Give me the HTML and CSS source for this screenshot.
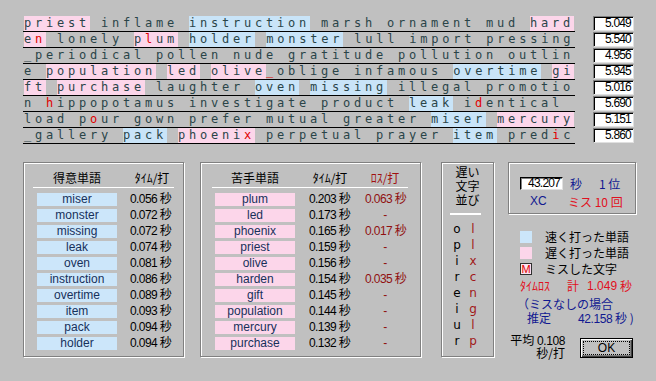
FILE: index.html
```html
<!DOCTYPE html>
<html lang="ja">
<head>
  <meta charset="UTF-8">
  <title>結果</title>
  <link rel="stylesheet" href="styles.css">
</head>
<body>
  <div class="dialog">
    <div class="typing">
      <div class="row"><div class="line"><span class="s">priest</span> inflame <span class="f">instruction</span> marsh ornament mud <span class="s">hard</span></div><div class="score">5.049</div></div>
      <div class="row"><div class="line"><span class="s">e<span class="m">n</span></span> lonely <span class="s">p<span class="m">l</span>um</span> <span class="f">holder</span> <span class="f">monster</span> lull import pressing</div><div class="score">5.540</div></div>
      <div class="row"><div class="line">_periodical pollen nude gratitude pollution outlin</div><div class="score">4.956</div></div>
      <div class="row"><div class="line">e <span class="s">population</span> <span class="s">led</span> <span class="s">olive</span><span class="m">_</span>oblige infamous <span class="f">overtime</span> <span class="s">gi</span></div><div class="score">5.945</div></div>
      <div class="row"><div class="line"><span class="s">ft</span> <span class="s">purchase</span> laughter <span class="f">oven</span> <span class="f">missing</span> illegal promotio</div><div class="score">5.016</div></div>
      <div class="row"><div class="line">n <span class="m">h</span>ippopotamus investigate product <span class="f">leak</span> i<span class="m">d</span>entical </div><div class="score">5.690</div></div>
      <div class="row"><div class="line">load p<span class="m">o</span>ur gown prefer mutual greater <span class="f">miser</span> <span class="s">mercury</span></div><div class="score">5.151</div></div>
      <div class="row"><div class="line">_gallery <span class="f">pack</span> <span class="s">phoeni<span class="m">x</span></span> perpetual prayer <span class="f">item</span> pred<span class="m">i</span>c</div><div class="score">5.860</div></div>
    </div>

    <div class="panels">
      <div class="group good">
        <div class="table-head">
          <span class="word-head">得意単語</span>
          <span class="time-head">ﾀｲﾑ/打</span>
        </div>
        <div class="rule"></div>
        <div class="table">
          <span class="cell fast">miser</span><span class="num">0.056 秒</span>
          <span class="cell fast">monster</span><span class="num">0.072 秒</span>
          <span class="cell fast">missing</span><span class="num">0.072 秒</span>
          <span class="cell fast">leak</span><span class="num">0.074 秒</span>
          <span class="cell fast">oven</span><span class="num">0.081 秒</span>
          <span class="cell fast">instruction</span><span class="num">0.086 秒</span>
          <span class="cell fast">overtime</span><span class="num">0.089 秒</span>
          <span class="cell fast">item</span><span class="num">0.093 秒</span>
          <span class="cell fast">pack</span><span class="num">0.094 秒</span>
          <span class="cell fast">holder</span><span class="num">0.094 秒</span>
        </div>
      </div>

      <div class="group bad">
        <div class="table-head">
          <span class="word-head">苦手単語</span>
          <span class="time-head">ﾀｲﾑ/打</span>
          <span class="loss-head">ﾛｽ/打</span>
        </div>
        <div class="rule"></div>
        <div class="table">
          <span class="cell slow">plum</span><span class="num">0.203 秒</span><span class="loss">0.063 秒</span>
          <span class="cell slow">led</span><span class="num">0.173 秒</span><span class="loss">-</span>
          <span class="cell slow">phoenix</span><span class="num">0.165 秒</span><span class="loss">0.017 秒</span>
          <span class="cell slow">priest</span><span class="num">0.159 秒</span><span class="loss">-</span>
          <span class="cell slow">olive</span><span class="num">0.156 秒</span><span class="loss">-</span>
          <span class="cell slow">harden</span><span class="num">0.154 秒</span><span class="loss">0.035 秒</span>
          <span class="cell slow">gift</span><span class="num">0.145 秒</span><span class="loss">-</span>
          <span class="cell slow">population</span><span class="num">0.144 秒</span><span class="loss">-</span>
          <span class="cell slow">mercury</span><span class="num">0.139 秒</span><span class="loss">-</span>
          <span class="cell slow">purchase</span><span class="num">0.132 秒</span><span class="loss">-</span>
        </div>
      </div>

      <div class="group letters">
        <div class="letters-head">遅い<br>文字<br>並び</div>
        <div class="rule"></div>
        <div class="letter-grid">
          <span>o</span><span class="red">l</span>
          <span>p</span><span class="red">l</span>
          <span>i</span><span class="red">x</span>
          <span>r</span><span class="red">c</span>
          <span>e</span><span class="red">n</span>
          <span>i</span><span class="red">g</span>
          <span>u</span><span class="red">l</span>
          <span>r</span><span class="red">p</span>
        </div>
      </div>

      <div class="side">
        <div class="group result">
          <div class="result-row">
            <span class="field">43.207</span>
            <span class="navy">秒</span>
            <span class="navy rank">1 位</span>
          </div>
          <div class="result-row second">
            <span class="navy user">XC</span>
            <span class="miss-count">ミス 10 回</span>
          </div>
        </div>

        <ul class="legend">
          <li><span class="swatch blue"></span>速く打った単語</li>
          <li><span class="swatch pink"></span>遅く打った単語</li>
          <li><span class="swatch mark">M</span>ミスした文字</li>
        </ul>

        <div class="timeloss">
          <span>ﾀｲﾑﾛｽ</span><span class="total">計</span><span class="amount">1.049</span><span class="unit">秒</span>
        </div>
        <div class="estimate">
          <div>（ミスなしの場合</div>
          <div class="estimate-line"><span class="label">推定</span><span class="value"><span class="digits">42.158</span> 秒 )</span></div>
        </div>

        <div class="footer">
          <div class="avg">平均 <span class="digits">0.108</span><br>秒/打</div>
          <button class="ok"><span>OK</span></button>
        </div>
      </div>
    </div>
  </div>
</body>
</html>
```

FILE: styles.css
```css
/* ダイアログ全体 */
body {
  margin: 0;
  background-color: #c0c0c0;
  font-family: "Liberation Sans", "Noto Sans CJK JP", sans-serif;
  font-size: 12px;
  color: #000;
}

.dialog {
  width: 656px;
  height: 381px;
  overflow: hidden;
}

/* 打鍵した行 */
.typing {
  padding: 16px 0 0 23px;
}

.row {
  display: flex;
  height: 16px;
}

.line {
  width: 551px;
  height: 15px;
  padding-left: 1px;
  border-bottom: 1px solid #000;
  font-family: "DejaVu Sans Mono", monospace;
  font-size: 12px;
  letter-spacing: 3.776px;
  line-height: 15px;
  white-space: pre;
  color: #2a4448;
}

.line .s,
.line .f {
  display: inline-block;
  height: 15px;
  vertical-align: top;
}

.line .s { background-color: #fcd6ea; }
.line .f { background-color: #c9e4f8; }
.line .m { color: #e00000; }

.score {
  box-sizing: border-box;
  width: 41px;
  height: 15px;
  margin-left: 18px;
  padding-right: 2px;
  background-color: #fff;
  border: 1px solid;
  border-color: #808080 #e0e0e0 #e0e0e0 #808080;
  box-shadow: inset 1px 1px 0 #000;
  text-align: right;
  line-height: 13px;
  letter-spacing: -0.8px;
}

/* 下段 */
.panels {
  display: flex;
  align-items: flex-start;
  margin-top: 18px;
  padding-left: 23px;
}

.group {
  box-sizing: border-box;
  border: 1px solid #808080;
  box-shadow: 1px 1px 0 #fff, inset 1px 1px 0 #fff;
}

.good, .bad {
  height: 195px;
  padding-top: 7px;
}

.good {
  width: 161px;
  padding-left: 13px;
}

.bad {
  width: 221px;
  margin-left: 16px;
  padding-left: 14px;
}

.table-head, .table {
  display: grid;
  column-gap: 13px;
}

.good .table-head, .good .table {
  grid-template-columns: 80px 44px;
}

.bad .table-head, .bad .table {
  grid-template-columns: 80px 42px 40px;
  column-gap: 14px;
}

.table-head {
  height: 16px;
  line-height: 16px;
  font-family: "Noto Sans CJK JP", sans-serif;
  text-align: center;
}

.loss-head { color: #a01010; }

.rule {
  height: 1px;
  margin-top: 1px;
  background-color: #fff;
}

.good .rule {
  width: 141px;
  margin-left: -4px;
}

.bad .rule {
  width: 196px;
  margin-left: -3px;
}

.table {
  margin-top: 5px;
  row-gap: 3px;
  line-height: 13px;
}

.cell {
  height: 13px;
  text-align: center;
  color: #17305a;
}

.cell.fast { background-color: #cce6fa; }
.cell.slow { background-color: #fcd6ea; }

.num, .loss {
  letter-spacing: -0.6px;
  white-space: nowrap;
}

.loss {
  text-align: center;
  color: #901010;
}

/* 遅い文字 */
.letters {
  width: 53px;
  height: 195px;
  margin-left: 20px;
  padding: 2px 0 0 7px;
}

.letters-head {
  font-family: "Noto Sans CJK JP", sans-serif;
  font-size: 12px;
  line-height: 14px;
  text-align: center;
  margin-left: -7px;
}

.letters .rule {
  width: 31px;
  height: 2px;
  margin: 6px 0 0 1px;
}

.letter-grid {
  display: grid;
  grid-template-columns: 16px 16px;
  grid-auto-rows: 16px;
  margin-top: 6px;
  line-height: 16px;
  text-align: center;
  font-family: "DejaVu Sans", sans-serif;
  font-size: 12px;
}

.letter-grid .red { color: #a01818; }

/* 右側 */
.side {
  width: 130px;
  margin-left: 14px;
  font-family: "Noto Sans CJK JP", sans-serif;
  white-space: nowrap;
}

.digits {
  font-family: "Liberation Sans", sans-serif;
  letter-spacing: -0.4px;
}

.result {
  width: 128px;
  height: 52px;
  padding: 14px 0 0 11px;
}

.result-row {
  display: flex;
  align-items: center;
  height: 13px;
  line-height: 13px;
}

.result-row.second {
  margin-top: 4px;
  height: 14px;
}

.navy { color: #101890; }

.field {
  box-sizing: border-box;
  width: 43px;
  height: 13px;
  margin-right: 7px;
  padding-right: 2px;
  background-color: #fff;
  border: 1px solid;
  border-color: #000 #e0e0e0 #e0e0e0 #000;
  box-shadow: inset 1px 1px 0 #808080;
  text-align: right;
  line-height: 11px;
  font-family: "Liberation Sans", sans-serif;
  letter-spacing: -0.8px;
}

.rank { margin-left: 17px; }

.user {
  margin-left: 10px;
  width: 38px;
  font-family: "Liberation Sans", sans-serif;
}

.miss-count { color: #e01020; }

.legend {
  list-style: none;
  margin: 15px 0 0;
  padding: 0 0 0 12px;
}

.legend li {
  display: flex;
  align-items: center;
  height: 16px;
  line-height: 16px;
}

.swatch {
  box-sizing: border-box;
  width: 12px;
  height: 12px;
  margin-right: 13px;
}

.swatch.blue { background-color: #cce6fa; }
.swatch.pink { background-color: #fcd6ea; }

.swatch.mark {
  border: 1px solid #303030;
  background-color: #fde4f0;
  color: #e00000;
  font-family: "Liberation Sans", sans-serif;
  font-size: 11px;
  line-height: 10px;
  text-align: center;
}

.timeloss {
  display: flex;
  margin-top: 2px;
  padding-left: 12px;
  line-height: 14px;
  color: #e01020;
}

.timeloss .total { margin-left: 17px; }
.timeloss .amount { margin-left: 8px; font-family: "Liberation Sans", sans-serif; }
.timeloss .unit { margin-left: 3px; }

.estimate {
  margin-top: 4px;
  padding-left: 9px;
  line-height: 14px;
  color: #101890;
}

.estimate-line {
  display: flex;
  padding-left: 10px;
}

.estimate-line .label,
.estimate-line .value {
  flex-shrink: 0;
}

.estimate-line .value {
  margin-left: 27px;
}

.footer {
  display: flex;
  align-items: flex-start;
  margin-top: 8px;
}

.avg {
  width: 57px;
  text-align: right;
  line-height: 12px;
}

.ok {
  box-sizing: border-box;
  width: 53px;
  height: 20px;
  margin: 4px 0 0 15px;
  padding: 2px;
  background-color: #c0c0c0;
  border: 1px solid #000;
  box-shadow: inset 1px 1px 0 #fff, inset -1px -1px 0 #404040, inset -2px -2px 0 #808080;
  font-family: "Liberation Sans", sans-serif;
  font-size: 12px;
}

.ok span {
  display: block;
  height: 12px;
  line-height: 12px;
  border: 1px dotted #000;
}
```
